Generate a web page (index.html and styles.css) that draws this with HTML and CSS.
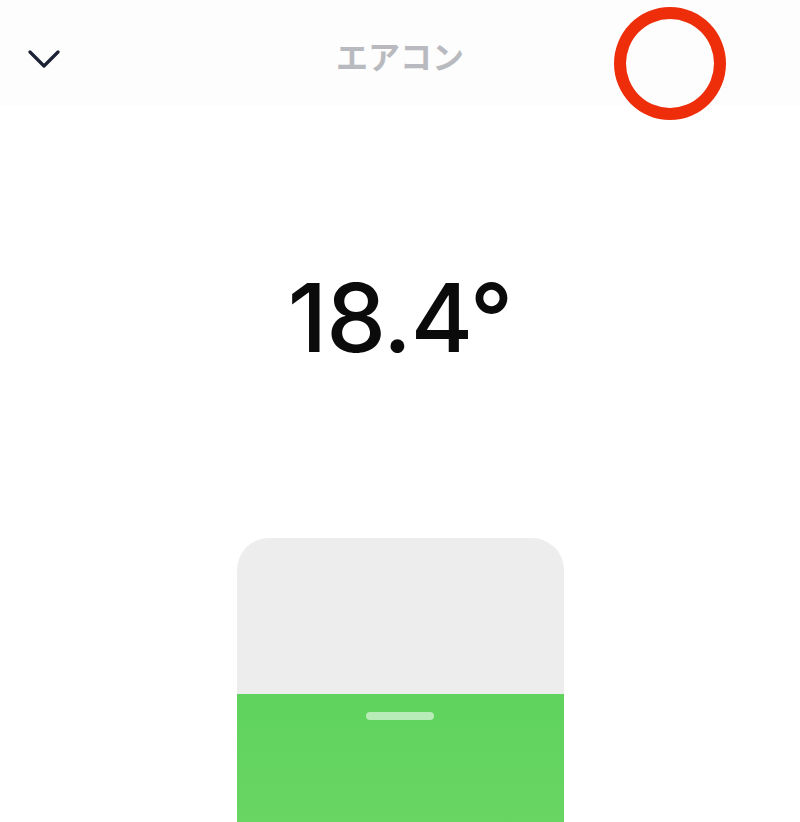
FILE: index.html
```html
<!DOCTYPE html>
<html lang="ja">
<head>
  <meta charset="UTF-8">
  <title>エアコン</title>
  <meta name="viewport" content="width=device-width, initial-scale=1.0">
  <link rel="stylesheet" href="styles.css">
</head>
<body>

<header class="top-bar">
  <button class="back-btn" aria-label="閉じる">
    <svg width="32" height="18" viewBox="0 0 32 18">
      <polyline points="2,2 16,16 30,2" fill="none" stroke="#1c2233" stroke-width="3.2" stroke-linecap="round" stroke-linejoin="round"/>
    </svg>
  </button>
  <h1 class="title">エアコン</h1>
  <div class="spacer"></div>
</header>

<div class="marker"></div>

<main class="content">
  <div class="temp">18.4°</div>

  <div class="slider">
    <div class="slider-fill">
      <div class="handle"></div>
    </div>
  </div>
</main>

</body>
</html>
```

FILE: styles.css
```css
* {
  margin: 0;
  padding: 0;
  box-sizing: border-box;
}

html, body {
  height: 100%;
  background: #ffffff;
  font-family: 'Inter', 'Noto Sans CJK JP', sans-serif;
  overflow: hidden;
}

.top-bar {
  height: 106px;
  background: #fdfdfd;
  display: flex;
  align-items: center;
  justify-content: space-between;
  padding: 0 28px 0 28px;
}

.back-btn {
  width: 120px;
  height: 40px;
  border: none;
  background: none;
  display: flex;
  align-items: center;
  margin-top: 12px;
}

.spacer {
  width: 120px;
}

.title {
  font-family: 'Noto Sans CJK JP', sans-serif;
  font-size: 32px;
  font-weight: 700;
  color: #b9babf;
  margin-top: 4px;
}

/* red ring drawn over the header */
.marker {
  position: absolute;
  top: 7px;
  left: 614px;
  width: 112px;
  height: 113px;
  border: 12px solid #ee2e0b;
  border-radius: 50%;
}

.content {
  display: flex;
  flex-direction: column;
  align-items: center;
}

.temp {
  margin-top: 164px;
  font-size: 95px;
  font-weight: 500;
  line-height: 1;
  color: #0b0b0b;
  letter-spacing: -1px;
}

.slider {
  margin-top: 173px;
  width: 327px;
  height: 420px;
  background: #ededed;
  border-radius: 32px;
  overflow: hidden;
  display: flex;
  flex-direction: column;
  justify-content: flex-end;
}

.slider-fill {
  height: 264px;
  background: linear-gradient(#5fd35e, #72d866);
  display: flex;
  justify-content: center;
  padding-top: 18px;
}

.handle {
  width: 68px;
  height: 8px;
  border-radius: 4px;
  background: rgba(255, 255, 255, 0.55);
}
```
